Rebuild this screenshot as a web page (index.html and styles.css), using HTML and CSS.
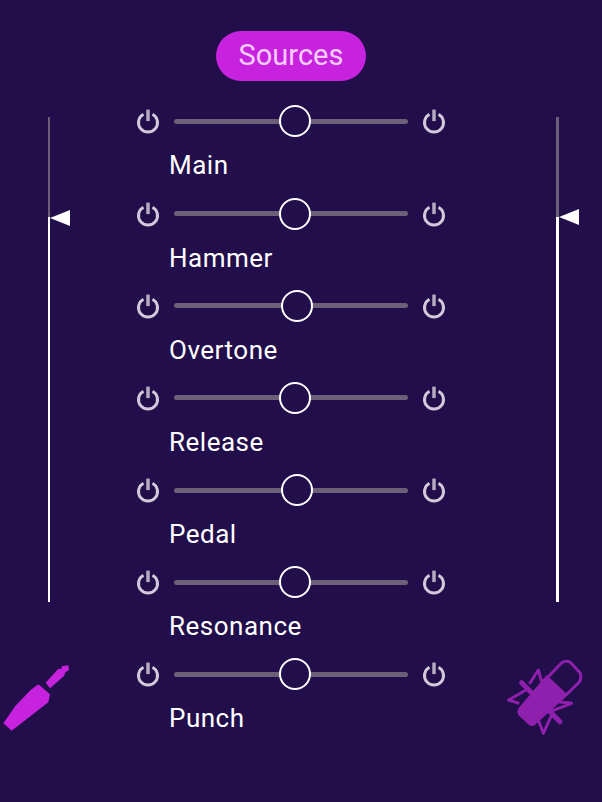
FILE: index.html
```html
<!DOCTYPE html>
<html lang="en">
<head>
<meta charset="utf-8">
<title>Sources</title>
<link rel="stylesheet" href="styles.css">
</head>
<body>
<svg class="defs" width="0" height="0" aria-hidden="true">
  <symbol id="power" viewBox="0 -0.6 24 26">
    <path class="power-ring" d="M7.5 5.63A9.5 9.5 0 1 0 16.5 5.63"/>
    <path class="power-bar" d="M12 1V12.5"/>
  </symbol>
</svg>
<main class="app">
  <aside class="side side-left">
    <div class="meter meter-left">
      <div class="meter-off" style="height:100px"></div>
      <div class="meter-on"></div>
      <span class="flag" style="top:93px"></span>
    </div>
    <svg class="jack" viewBox="0 0 300 330">
      <path d="M137 128L175 86L185 86L185 79L205 76L207 90L196 97L192 108L150 145Z"/>
      <path d="M115 133L150 163L145 187L35 272L10 250L46 198L92 150Z"/>
    </svg>
  </aside>
  <section class="center">
    <h1 class="pill">Sources</h1>
    <div class="channels">
      <div class="channel">
        <div class="controls">
          <svg class="power"><use href="#power"/></svg>
          <div class="track"><span class="thumb" style="left:51.7%"></span></div>
          <svg class="power"><use href="#power"/></svg>
        </div>
        <div class="label">Main</div>
      </div>
      <div class="channel">
        <div class="controls">
          <svg class="power"><use href="#power"/></svg>
          <div class="track"><span class="thumb" style="left:51.7%"></span></div>
          <svg class="power"><use href="#power"/></svg>
        </div>
        <div class="label">Hammer</div>
      </div>
      <div class="channel">
        <div class="controls">
          <svg class="power"><use href="#power"/></svg>
          <div class="track"><span class="thumb" style="left:52.6%"></span></div>
          <svg class="power"><use href="#power"/></svg>
        </div>
        <div class="label">Overtone</div>
      </div>
      <div class="channel">
        <div class="controls">
          <svg class="power"><use href="#power"/></svg>
          <div class="track"><span class="thumb" style="left:51.7%"></span></div>
          <svg class="power"><use href="#power"/></svg>
        </div>
        <div class="label">Release</div>
      </div>
      <div class="channel">
        <div class="controls">
          <svg class="power"><use href="#power"/></svg>
          <div class="track"><span class="thumb" style="left:52.6%"></span></div>
          <svg class="power"><use href="#power"/></svg>
        </div>
        <div class="label">Pedal</div>
      </div>
      <div class="channel">
        <div class="controls">
          <svg class="power"><use href="#power"/></svg>
          <div class="track"><span class="thumb" style="left:51.7%"></span></div>
          <svg class="power"><use href="#power"/></svg>
        </div>
        <div class="label">Resonance</div>
      </div>
      <div class="channel">
        <div class="controls">
          <svg class="power"><use href="#power"/></svg>
          <div class="track"><span class="thumb" style="left:51.7%"></span></div>
          <svg class="power"><use href="#power"/></svg>
        </div>
        <div class="label">Punch</div>
      </div>
    </div>
  </section>
  <aside class="side side-right">
    <div class="meter meter-right">
      <div class="meter-off" style="height:100px"></div>
      <div class="meter-on"></div>
      <span class="flag" style="top:92px"></span>
    </div>
    <svg class="mic" viewBox="0 0 330 330">
      <path class="mic-line" d="M175 110L215 68Q228 60 240 66L270 98Q276 112 268 126L228 165"/>
      <path class="mic-line" d="M118 132L145 90L155 125M108 150L56 180L88 190M145 240L160 280L185 225M205 185L245 190L180 215"/>
      <path class="mic-rod" d="M95 128L210 245"/>
      <path class="mic-body" d="M170 105L234 165L132 257Q124 260 116 254L86 226Q78 214 86 204Z"/>
    </svg>
  </aside>
</main>
</body>
</html>
```
FILE: styles.css
```css
* {
  box-sizing: border-box;
}

html,
body {
  margin: 0;
  height: 100%;
  background: #220e4a;
  overflow: hidden;
}

.defs {
  position: absolute;
}

.app {
  display: grid;
  grid-template-columns: 136px 310px 156px;
  height: 802px;
  font-family: Roboto, "Liberation Sans", sans-serif;
  color: #fff;
}

.side {
  padding-top: 117px;
}

.meter {
  position: relative;
  display: flex;
  flex-direction: column;
  height: 485px;
}

.meter-left {
  width: 2px;
  margin-left: 48px;
}

.meter-right {
  width: 3px;
  margin-left: 110px;
}

.meter-off {
  background: #6c6078;
}

.meter-on {
  flex: 1;
  background: #fff;
}

.flag {
  position: absolute;
  left: 100%;
  width: 20px;
  height: 16px;
  background: #fff;
  clip-path: polygon(0 50%, 100% 0, 100% 100%);
}

.jack {
  display: block;
  width: 100px;
  height: 110px;
  margin-top: 38px;
}

.jack path {
  fill: #c722dd;
}

.mic {
  display: block;
  width: 110px;
  height: 110px;
  margin-top: 38px;
  margin-left: 44px;
}

.mic-line {
  fill: none;
  stroke: #8f20ad;
  stroke-width: 9;
  stroke-linejoin: round;
}

.mic-rod {
  fill: none;
  stroke: #8f20ad;
  stroke-width: 15;
  stroke-linecap: round;
}

.mic-body {
  fill: #8f20ad;
}

.center {
  display: flex;
  flex-direction: column;
  padding-top: 31px;
}

.pill {
  align-self: center;
  width: 150px;
  height: 50px;
  margin: 0;
  border-radius: 25px;
  background: #c722dd;
  color: #f6cdff;
  font-size: 29px;
  font-weight: 400;
  line-height: 49px;
  text-align: center;
}

.channels {
  padding-top: 24.4px;
}

.channel {
  height: 92.17px;
}

.controls {
  display: flex;
  align-items: center;
  height: 32px;
}

.power {
  flex: none;
  width: 24px;
  height: 26px;
}

.power-ring {
  fill: none;
  stroke: #d3c9da;
  stroke-width: 3;
}

.power-bar {
  fill: none;
  stroke: #b5abc0;
  stroke-width: 3.5;
}

.track {
  position: relative;
  flex: none;
  width: 234px;
  height: 5px;
  margin: 0 14px;
  border-radius: 2.5px;
  background: #6c6078;
}

.thumb {
  position: absolute;
  top: 50%;
  width: 32px;
  height: 32px;
  border: 2px solid #fff;
  border-radius: 50%;
  background: #220e4a;
  transform: translate(-50%, -50%);
}

.label {
  margin-top: 14px;
  padding-left: 33px;
  font-size: 26px;
  line-height: 28px;
  letter-spacing: 0.5px;
}
```
